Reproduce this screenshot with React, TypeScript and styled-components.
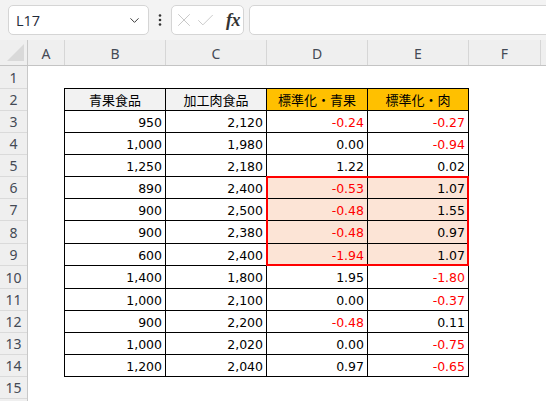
import React from 'react'
import styled, { createGlobalStyle } from 'styled-components'
import { ChevronDown, X, Check } from 'lucide-react'

const GlobalStyle = createGlobalStyle`
  html, body {
    margin: 0;
    padding: 0;
    background: #ffffff;
  }
  body {
    font-family: "Noto Sans", "Liberation Sans", sans-serif;
    overflow: hidden;
  }
`

type Row = { b: number; c: number; d: string; e: string }

const rows: Row[] = [
  { b: 950, c: 2120, d: '-0.24', e: '-0.27' },
  { b: 1000, c: 1980, d: '0.00', e: '-0.94' },
  { b: 1250, c: 2180, d: '1.22', e: '0.02' },
  { b: 890, c: 2400, d: '-0.53', e: '1.07' },
  { b: 900, c: 2500, d: '-0.48', e: '1.55' },
  { b: 900, c: 2380, d: '-0.48', e: '0.97' },
  { b: 600, c: 2400, d: '-1.94', e: '1.07' },
  { b: 1400, c: 1800, d: '1.95', e: '-1.80' },
  { b: 1000, c: 2100, d: '0.00', e: '-0.37' },
  { b: 900, c: 2200, d: '-0.48', e: '0.11' },
  { b: 1000, c: 2020, d: '0.00', e: '-0.75' },
  { b: 1200, c: 2040, d: '0.97', e: '-0.65' },
]

// heights of sheet rows 1..16 (row 1 includes the table's top line)
const rowHeights = [23, 22, 22, 22, 22, 22, 22, 23, 22, 23, 22, 22, 22, 22, 22, 22]

const columns = [
  { name: 'A', width: 37 },
  { name: 'B', width: 101 },
  { name: 'C', width: 101 },
  { name: 'D', width: 101 },
  { name: 'E', width: 101 },
  { name: 'F', width: 72 },
  { name: '', width: 60 },
]

const fmt = (n: number) => n.toLocaleString('en-US')

export default function App() {
  return (
    <>
      <GlobalStyle />
      <Window>
        <Toolbar>
          <NameBox>
            <NameText>L17</NameText>
            <ChevronDown size={15} strokeWidth={1.6} color="#3a3a3a" />
          </NameBox>
          <Dots>
            <svg width="4" height="12" viewBox="0 0 4 12">
              <circle cx="2" cy="1.5" r="1.3" fill="#333" />
              <circle cx="2" cy="6" r="1.3" fill="#333" />
              <circle cx="2" cy="10.5" r="1.3" fill="#333" />
            </svg>
          </Dots>
          <FxBox>
            <X size={22} strokeWidth={1} color="#c4c4c4" />
            <Check size={21} strokeWidth={1} color="#c4c4c4" />
            <FxText>fx</FxText>
          </FxBox>
          <FormulaInput />
        </Toolbar>

        <ColHeaderRow>
          <Corner>
            <svg width="18" height="18" viewBox="0 0 18 18">
              <polygon points="0,17 17,17 17,0" fill="#d9d9d9" />
            </svg>
          </Corner>
          {columns.map((col, i) => (
            <ColHead key={i} $width={col.width}>
              {col.name}
            </ColHead>
          ))}
        </ColHeaderRow>

        <Body>
          <RowHeaders>
            {rowHeights.map((h, i) => (
              <RowHead key={i} $height={h}>
                {i < 15 ? i + 1 : ''}
              </RowHead>
            ))}
          </RowHeaders>

          <Canvas>
            <TableWrap>
              <HeadCell>青果食品</HeadCell>
              <HeadCell>加工肉食品</HeadCell>
              <HeadCell $accent>標準化・青果</HeadCell>
              <HeadCell $accent>標準化・肉</HeadCell>

              {rows.map((r, i) => {
                const h = rowHeights[i + 2]
                const hl = i >= 3 && i <= 6
                return (
                  <React.Fragment key={i}>
                    <NumCell $height={h}>{fmt(r.b)}</NumCell>
                    <NumCell $height={h}>{fmt(r.c)}</NumCell>
                    <NumCell $height={h} $neg={r.d.startsWith('-')} $fill={hl}>
                      {r.d}
                    </NumCell>
                    <NumCell $height={h} $neg={r.e.startsWith('-')} $fill={hl}>
                      {r.e}
                    </NumCell>
                  </React.Fragment>
                )
              })}

              <Highlight />
            </TableWrap>
          </Canvas>
        </Body>
      </Window>
    </>
  )
}

const Window = styled.div`
  width: 546px;
  height: 401px;
  overflow: hidden;
  background: #ffffff;
`

const Toolbar = styled.div`
  height: 40px;
  box-sizing: border-box;
  padding-top: 5px;
  display: flex;
  align-items: flex-start;
  background: #f3f3f3;
`

const NameBox = styled.div`
  margin-left: 8px;
  width: 141px;
  height: 30px;
  box-sizing: border-box;
  border: 1px solid #d5d5d5;
  border-radius: 5px;
  background: #ffffff;
  display: flex;
  align-items: center;
  justify-content: space-between;
  padding: 0 6px 0 7px;
`

const NameText = styled.span`
  font-family: "Open Sans", "Noto Sans", sans-serif;
  font-size: 14.5px;
  color: #1f2b3a;
`

const Dots = styled.div`
  width: 22px;
  height: 30px;
  display: flex;
  align-items: center;
  justify-content: center;
`

const FxBox = styled.div`
  width: 73px;
  height: 30px;
  box-sizing: border-box;
  border: 1px solid #d5d5d5;
  border-radius: 5px;
  background: #ffffff;
  display: flex;
  align-items: center;
  gap: 0;
  padding-left: 1px;
`

const FxText = styled.span`
  margin-left: 10px;
  font-family: "Liberation Serif", "DejaVu Serif", serif;
  font-style: italic;
  font-weight: 700;
  font-size: 18px;
  color: #333333;
  letter-spacing: -0.5px;
`

const FormulaInput = styled.div`
  margin-left: 5px;
  flex: 1;
  height: 30px;
  margin-right: -12px;
  box-sizing: border-box;
  border: 1px solid #d5d5d5;
  border-radius: 5px;
  background: #ffffff;
`

const ColHeaderRow = styled.div`
  height: 26px;
  box-sizing: border-box;
  display: flex;
  background: #efefef;
  border-bottom: 1px solid #c4c4c4;
`

const Corner = styled.div`
  width: 28px;
  flex: none;
  box-sizing: border-box;
  border-right: 1px solid #c8c8c8;
  display: flex;
  align-items: flex-end;
  justify-content: flex-end;
  padding: 0 2px 3px 0;
`

const ColHead = styled.div<{ $width: number }>`
  width: ${(p) => p.$width}px;
  flex: none;
  box-sizing: border-box;
  border-right: 1px solid #d6d6d6;
  display: flex;
  align-items: center;
  justify-content: center;
  font-size: 14px;
  color: #444a55;
  padding-top: 1px;
`

const Body = styled.div`
  display: flex;
`

const RowHeaders = styled.div`
  width: 28px;
  flex: none;
  box-sizing: border-box;
  background: #efefef;
  border-right: 1px solid #c8c8c8;
`

const RowHead = styled.div<{ $height: number }>`
  height: ${(p) => p.$height}px;
  box-sizing: border-box;
  border-bottom: 1px solid #dadada;
  display: flex;
  align-items: center;
  justify-content: center;
  font-size: 14px;
  color: #444a55;
`

const Canvas = styled.div`
  flex: 1;
  padding-left: 36px;
  padding-top: 22px;
`

const TableWrap = styled.div`
  position: relative;
  display: grid;
  grid-template-columns: repeat(4, 101px);
  width: max-content;
  border-left: 1px solid #000000;
  border-top: 1px solid #000000;
`

const HeadCell = styled.div<{ $accent?: boolean }>`
  height: 22px;
  box-sizing: border-box;
  border-right: 1px solid #000000;
  border-bottom: 1px solid #000000;
  background: ${(p) => (p.$accent ? '#ffc000' : '#f2f2f2')};
  display: flex;
  align-items: center;
  justify-content: center;
  font-family: "Noto Sans CJK JP", "Noto Sans", sans-serif;
  font-size: 13px;
  color: #000000;
`

const NumCell = styled.div<{ $height: number; $neg?: boolean; $fill?: boolean }>`
  height: ${(p) => p.$height}px;
  box-sizing: border-box;
  border-right: 1px solid #000000;
  border-bottom: 1px solid #000000;
  background: ${(p) => (p.$fill ? '#fce4d6' : '#ffffff')};
  display: flex;
  align-items: center;
  justify-content: flex-end;
  padding: 1px 3px 0 0;
  font-family: "DejaVu Sans", "Noto Sans", sans-serif;
  font-size: 12.5px;
  color: ${(p) => (p.$neg ? '#ff0000' : '#000000')};
`

const Highlight = styled.div`
  position: absolute;
  left: 201px;
  top: 87px;
  width: 203px;
  height: 90px;
  box-sizing: border-box;
  border: 2px solid #ff0000;
  pointer-events: none;
`
